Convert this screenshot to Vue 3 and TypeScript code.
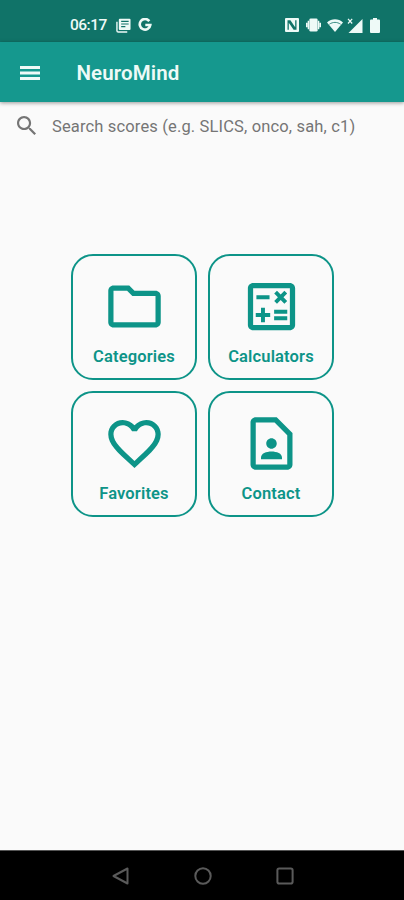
<script setup lang="ts">
interface Tile {
  label: string
  path: string
}

const tiles: Tile[] = [
  {
    label: 'Categories',
    path: 'M9.17 6l2 2H20v10H4V6h5.17M10 4H4c-1.1 0-1.99.9-1.99 2L2 18c0 1.1.9 2 2 2h16c1.1 0 2-.9 2-2V8c0-1.1-.9-2-2-2h-8l-2-2z',
  },
  {
    label: 'Calculators',
    path: 'M19 3H5c-1.1 0-2 .9-2 2v14c0 1.1.9 2 2 2h14c1.1 0 2-.9 2-2V5c0-1.1-.9-2-2-2zm0 16H5V5h14v14zM6.25 7.72h5v1.5h-5zM13 15.75h5v1.5h-5zM13 13.25h5v1.5h-5zM8 18h1.5v-2h2v-1.5h-2v-2H8v2H6V16h2zM14.09 10.95l1.41-1.41 1.41 1.41 1.06-1.06-1.41-1.42 1.41-1.41L16.91 6 15.5 7.41 14.09 6l-1.06 1.06 1.41 1.41-1.41 1.42z',
  },
  {
    label: 'Favorites',
    path: 'M16.5 3c-1.74 0-3.41.81-4.5 2.09C10.91 3.81 9.24 3 7.5 3 4.42 3 2 5.42 2 8.5c0 3.78 3.4 6.86 8.55 11.54L12 21.35l1.45-1.32C18.6 15.36 22 12.28 22 8.5 22 5.42 19.58 3 16.5 3zm-4.4 15.55l-.1.1-.1-.1C7.14 14.24 4 11.39 4 8.5 4 6.5 5.5 5 7.5 5c1.54 0 3.04.99 3.57 2.36h1.87C13.46 5.99 14.96 5 16.5 5c2 0 3.5 1.5 3.5 3.5 0 2.89-3.14 5.74-7.9 10.05z',
  },
  {
    label: 'Contact',
    path: 'M13.17 4L18 8.83V20H6V4h7.17M14 2H6c-1.1 0-2 .9-2 2v16c0 1.1.9 2 2 2h12c1.1 0 2-.9 2-2V8l-6-6zm-2 12c1.1 0 2-.9 2-2s-.9-2-2-2-2 .9-2 2 .9 2 2 2zm4 3.43c0-.81-.48-1.53-1.22-1.85-.85-.37-1.79-.58-2.78-.58s-1.93.21-2.78.58C8.48 15.9 8 16.62 8 17.43V18h8v-.57z',
  },
]
</script>

<template>
  <div class="screen">
    <div class="status">
      <span class="time">06:17</span>
      <svg class="s-news" viewBox="0 0 16 16">
        <path d="M1 4v9.5c0 .8.7 1.5 1.5 1.5H12" fill="none" stroke="currentColor" stroke-width="1.5" />
        <path fill-rule="evenodd" d="M4 .8h10.5a1 1 0 0 1 1 1v10a1 1 0 0 1-1 1H4a1 1 0 0 1-1-1v-10a1 1 0 0 1 1-1zM5.500 3v1.200h8V3zM5.500 5.800V7h8V5.800zM5.500 8.600v1.200h4.500V8.600z" />
      </svg>
      <svg class="s-g" viewBox="0 0 14 14">
        <path d="M11.3 3.1A5.3 5.3 0 1 0 12.3 7H7.3" fill="none" stroke="currentColor" stroke-width="2.6" />
      </svg>
      <div class="status-right">
        <svg class="s-nfc" viewBox="0 0 14 14">
          <path fill-rule="evenodd" d="M1 0h12a1 1 0 0 1 1 1v12a1 1 0 0 1-1 1H1a1 1 0 0 1-1-1V1a1 1 0 0 1 1-1zM2.500 2.200v9.600h1.300V4.800l4.800 7h2.900V2.200h-1.300v7l-4.800-7z" />
        </svg>
        <svg class="s-vib" viewBox="0 0 16 14">
          <rect x="3.600" y="0" width="8.800" height="14" rx="1.500" />
          <path d="M2.600 2.500v9M13.400 2.500v9M.8 4.700v4.600M15.200 4.700v4.600" fill="none" stroke="currentColor" stroke-width="1.600" />
        </svg>
        <svg class="s-wifi" viewBox="0 0 16 13">
          <path d="M0 3.5C4.7-.7 11.3-.7 16 3.5L8 13z" />
          <path class="wifi-line" d="M2.4 5.2c3.5-2.4 7.7-2.4 11.200 0" />
        </svg>
        <svg class="s-cell" viewBox="0 0 16 15">
          <path d="M15.5 1v14H1.500z" />
          <path d="M1 .8l4.2 4.700M5.200.8L1 5.500" fill="none" stroke="currentColor" stroke-width="1.200" />
        </svg>
        <svg class="s-bat" viewBox="0 0 10 15">
          <path d="M3 0h4v1.600h2a1 1 0 0 1 1 1V14a1 1 0 0 1-1 1H1a1 1 0 0 1-1-1V2.600a1 1 0 0 1 1-1h2z" />
        </svg>
      </div>
    </div>

    <header class="appbar">
      <svg class="menu" viewBox="0 0 20 14">
        <path d="M0 0h20v3H0zM0 5.500h20v3H0zM0 11h20v3H0z" />
      </svg>
      <h1 class="title">NeuroMind</h1>
    </header>

    <label class="search">
      <svg class="lens" viewBox="3 3 17.49 17.49">
        <path d="M15.5 14h-.79l-.28-.27C15.41 12.59 16 11.11 16 9.5 16 5.91 13.09 3 9.5 3S3 5.91 3 9.5 5.91 16 9.5 16c1.61 0 3.09-.59 4.23-1.57l.27.28v.79l5 4.99L20.49 19l-4.99-5zm-6 0C7.01 14 5 11.99 5 9.5S7.01 5 9.5 5 14 7.01 14 9.5 11.99 14 9.5 14z" />
      </svg>
      <span class="hint">Search scores (e.g. SLICS, onco, sah, c1)</span>
    </label>

    <main class="grid">
      <button v-for="tile in tiles" :key="tile.label" class="tile" type="button">
        <svg class="tile-icon" viewBox="0 0 24 24"><path :d="tile.path" /></svg>
        <span class="tile-label">{{ tile.label }}</span>
      </button>
    </main>

    <nav class="navbar">
      <svg viewBox="0 0 20 20"><path d="M17.500 2.500v15L3.500 10z" /></svg>
      <svg viewBox="0 0 20 20"><circle cx="10" cy="10" r="7.700" /></svg>
      <svg viewBox="0 0 20 20"><rect x="2.400" y="2.400" width="15.200" height="15.200" rx="1.800" /></svg>
    </nav>
  </div>
</template>

<style>
body {
  margin: 0;
}
</style>

<style scoped>
.screen {
  display: flex;
  flex-direction: column;
  width: 404px;
  height: 900px;
  overflow: hidden;
  background: #fafafa;
  font-family: Roboto, "Liberation Sans", sans-serif;
}
svg {
  display: block;
  flex: none;
  fill: currentColor;
}
.status {
  flex: none;
  display: flex;
  align-items: center;
  box-sizing: border-box;
  height: 42px;
  padding: 8px 24px 0 70px;
  background: #107368;
  color: #eefaf7;
}
.time {
  width: 46px;
  font-size: 15.5px;
  font-weight: 500;
  line-height: 20px;
  letter-spacing: -0.5px;
}
.s-news {
  width: 15px;
  height: 15px;
}
.s-g {
  width: 14px;
  height: 14px;
  margin-left: 7px;
}
.status-right {
  display: flex;
  align-items: center;
  margin-left: auto;
}
.s-nfc {
  width: 14px;
  height: 14px;
}
.s-vib {
  width: 15px;
  height: 14px;
  margin-left: 7px;
}
.s-wifi {
  width: 16px;
  height: 13px;
  margin-left: 6px;
}
.wifi-line {
  fill: none;
  stroke: #107368;
  stroke-width: 0.8;
}
.s-cell {
  width: 16px;
  height: 15px;
  margin-left: 4px;
}
.s-bat {
  width: 10px;
  height: 15px;
  margin-left: 7px;
}
.appbar {
  flex: none;
  display: flex;
  align-items: center;
  box-sizing: border-box;
  height: 60px;
  padding: 2px 20px 0;
  background: #15988e;
  color: #eefaf7;
  box-shadow: 0 1px 4px rgba(0, 0, 0, 0.4);
}
.menu {
  width: 20px;
  height: 14px;
}
.title {
  margin: 0 0 0 36.5px;
  font-size: 20.5px;
  font-weight: 600;
  line-height: 28px;
  letter-spacing: 0.1px;
}
.search {
  flex: none;
  display: flex;
  align-items: center;
  height: 50px;
  padding-left: 17px;
  color: #757575;
}
.lens {
  width: 19px;
  height: 19px;
  margin-top: -3px;
}
.hint {
  margin-left: 16px;
  font-size: 16.5px;
  line-height: 20px;
  letter-spacing: 0.15px;
  white-space: nowrap;
}
.grid {
  flex: 1;
  display: grid;
  grid-template-columns: 126px 126px;
  grid-auto-rows: 126px;
  gap: 11px;
  align-content: start;
  padding: 102px 0 0 71px;
}
.tile {
  display: flex;
  flex-direction: column;
  align-items: center;
  box-sizing: border-box;
  margin: 0;
  padding: 19px 0 0;
  border: 2px solid #0d9488;
  border-radius: 22px;
  background: transparent;
  color: #0d9488;
  font-family: inherit;
}
.tile-icon {
  width: 63px;
  height: 63px;
}
.tile-label {
  margin-top: 9px;
  font-size: 16.5px;
  font-weight: 600;
  line-height: 20px;
  letter-spacing: 0.15px;
}
.navbar {
  flex: none;
  display: flex;
  align-items: center;
  justify-content: center;
  gap: 62.5px;
  box-sizing: border-box;
  height: 50px;
  padding-left: 1px;
  border-top: 1px solid #555;
  background: #000;
}
.navbar svg {
  width: 20px;
  height: 20px;
  fill: none;
  stroke: #5a5a5a;
  stroke-width: 2;
  stroke-linejoin: round;
}
</style>
